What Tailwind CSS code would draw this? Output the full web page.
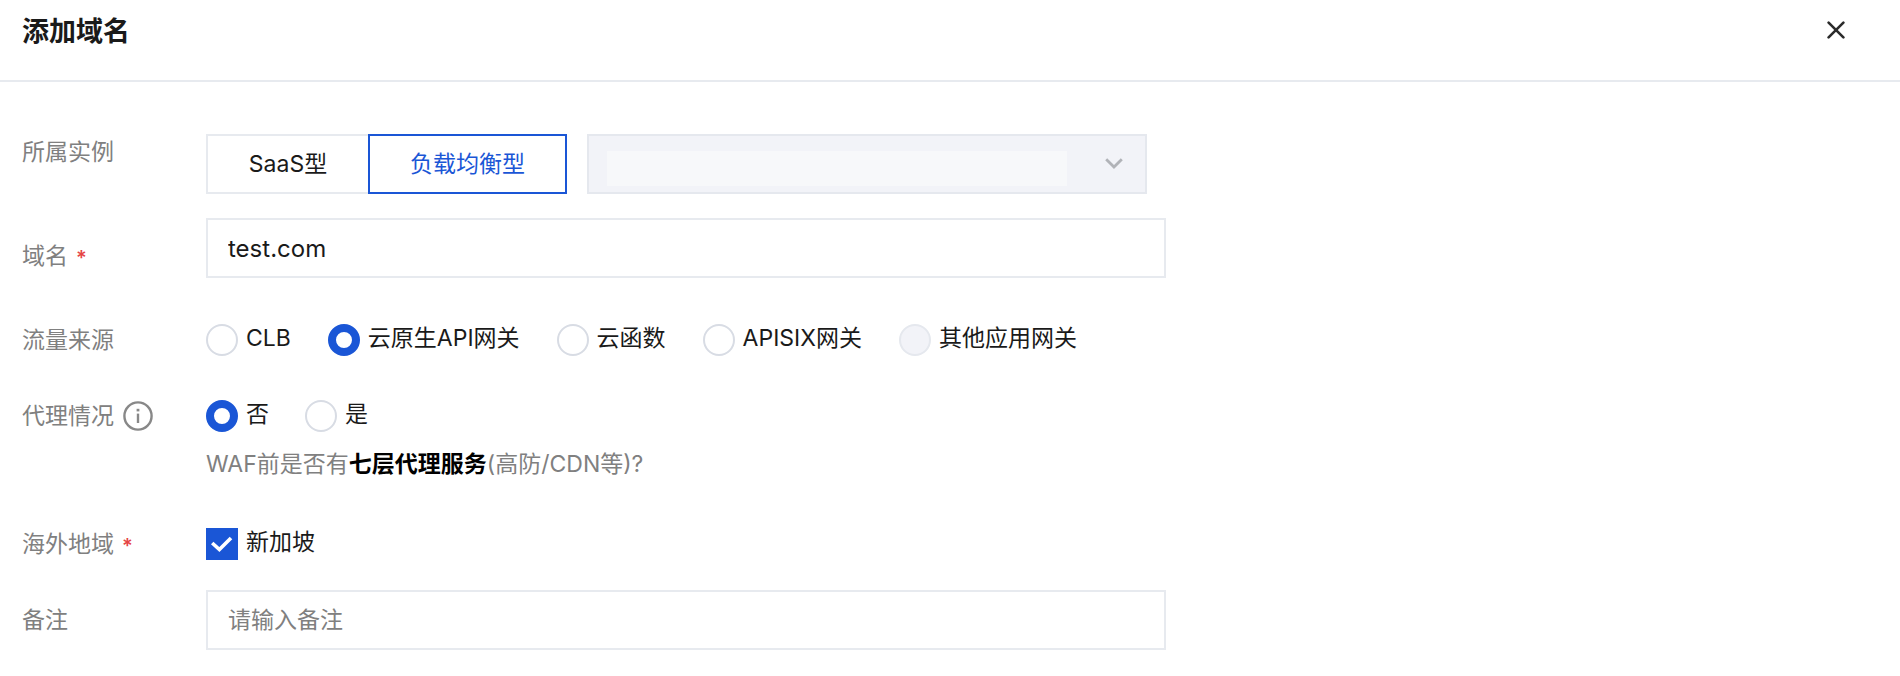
<!DOCTYPE html>
<html lang="zh-CN">
<head>
    <meta charset="UTF-8">
    <meta name="viewport" content="width=device-width, initial-scale=1.0">
    <title>添加域名</title>
    <script src="https://cdn.jsdelivr.net/npm/@tailwindcss/browser@4"></script>
</head>
<body class="min-h-screen bg-white font-['Inter','Noto_Sans_CJK_SC',sans-serif] text-[23px] leading-9 text-[#1a1a1a]">
    <!-- Header -->
    <header class="flex items-start justify-between border-b-2 border-[#e7eaef] pt-3 pr-[52px] pb-[30px] pl-[22px]">
        <h1 class="pt-0.5 text-[27px] leading-9 font-bold">添加域名</h1>
        <button type="button" aria-label="关闭" class="flex h-9 w-6 items-center justify-center">
            <svg class="h-[18px] w-[18px]" viewBox="0 0 18 18" fill="none" stroke="#2b2b2b" stroke-width="2.6" stroke-linecap="round">
                <path d="M1.6 1.6L16.4 16.4M16.4 1.6L1.6 16.4" />
            </svg>
        </button>
    </header>

    <form class="px-[22px] pt-[52px]">
        <!-- Instance -->
        <div class="flex items-start">
            <label for="instance" class="w-[184px] shrink-0 text-[#808080]">所属实例</label>
            <div class="flex gap-5">
                <div class="flex">
                    <button type="button" class="h-[60px] w-[162px] border-2 border-r-0 border-[#e7eaef]">SaaS型</button>
                    <button type="button" class="h-[60px] w-[199px] border-2 border-[#1a56d6] text-[#1a56d6]">负载均衡型</button>
                </div>
                <div class="relative w-[560px]">
                    <select id="instance" disabled class="h-[60px] w-full appearance-none border-2 border-[#e5e8ee] bg-[#f2f3f8] px-5 opacity-100">
                        <option></option>
                    </select>
                    <div class="absolute top-[17px] left-5 h-[35px] w-[460px] bg-[#f7f8fa]"></div>
                    <svg class="absolute top-6 right-6 h-3 w-[18px]" viewBox="0 0 18 12" fill="none" stroke="#b1b3b8" stroke-width="2.8">
                        <path d="M1.2 1.2L9 9L16.8 1.2" />
                    </svg>
                </div>
            </div>
        </div>

        <!-- Domain -->
        <div class="mt-6 flex items-start">
            <label for="domain" class="flex w-[184px] shrink-0 gap-2 pt-5 text-[#808080]">域名<span class="pt-0.5 text-[20px] leading-9 font-semibold text-[#e54545]">*</span></label>
            <input id="domain" type="text" value="test.com" class="h-[60px] w-[960px] border-2 border-[#e7eaef] px-5 text-[24px] outline-none">
        </div>

        <!-- Traffic source -->
        <div class="mt-11 flex items-center" role="radiogroup" aria-labelledby="sourceLabel">
            <span id="sourceLabel" class="w-[184px] shrink-0 text-[#808080]">流量来源</span>
            <div class="flex h-9 items-center gap-[37px]">
                <label class="flex items-center gap-2">
                    <input type="radio" name="source" class="h-8 w-8 appearance-none rounded-full border-2 border-[#d8dce4] checked:border-8 checked:border-[#1a56d6]">
                    <span class="pb-1 leading-8">CLB</span>
                </label>
                <label class="flex items-center gap-2">
                    <input type="radio" name="source" checked class="h-8 w-8 appearance-none rounded-full border-2 border-[#d8dce4] checked:border-8 checked:border-[#1a56d6]">
                    <span class="pb-1 leading-8">云原生API网关</span>
                </label>
                <label class="flex items-center gap-2">
                    <input type="radio" name="source" class="h-8 w-8 appearance-none rounded-full border-2 border-[#d8dce4] checked:border-8 checked:border-[#1a56d6]">
                    <span class="pb-1 leading-8">云函数</span>
                </label>
                <label class="flex items-center gap-2">
                    <input type="radio" name="source" class="h-8 w-8 appearance-none rounded-full border-2 border-[#d8dce4] checked:border-8 checked:border-[#1a56d6]">
                    <span class="pb-1 leading-8">APISIX网关</span>
                </label>
                <label class="flex items-center gap-2">
                    <input type="radio" name="source" disabled class="h-8 w-8 appearance-none rounded-full border-2 border-[#e5e8ee] bg-[#f2f3f8]">
                    <span class="pb-1 leading-8">其他应用网关</span>
                </label>
            </div>
        </div>

        <!-- Proxy -->
        <div class="mt-10 flex items-start" role="radiogroup" aria-labelledby="proxyLabel">
            <div class="flex w-[184px] shrink-0 items-center gap-[9px] text-[#808080]">
                <span id="proxyLabel">代理情况</span>
                <svg class="h-[30px] w-[30px]" viewBox="0 0 30 30" fill="none" stroke="#888" stroke-width="2.4">
                    <circle cx="15" cy="15" r="13.6" />
                    <path d="M15 12.6V22" />
                    <path d="M15 7.8V10.4" stroke-width="2.8" />
                </svg>
            </div>
            <div>
                <div class="flex h-9 items-center gap-9">
                    <label class="flex items-center gap-2">
                        <input type="radio" name="proxy" checked class="h-8 w-8 appearance-none rounded-full border-2 border-[#d8dce4] checked:border-8 checked:border-[#1a56d6]">
                        <span class="pb-1 leading-8">否</span>
                    </label>
                    <label class="flex items-center gap-2">
                        <input type="radio" name="proxy" class="h-8 w-8 appearance-none rounded-full border-2 border-[#d8dce4] checked:border-8 checked:border-[#1a56d6]">
                        <span class="pb-1 leading-8">是</span>
                    </label>
                </div>
                <p class="mt-3 text-[#808080]">WAF前是否有<strong class="font-bold text-black">七层代理服务</strong>(高防/CDN等)?</p>
            </div>
        </div>

        <!-- Region -->
        <div class="mt-11 flex items-start" role="group" aria-labelledby="regionLabel">
            <span id="regionLabel" class="flex h-9 w-[184px] shrink-0 gap-2 text-[#808080]">海外地域<span class="pt-0.5 text-[20px] leading-9 font-semibold text-[#e54545]">*</span></span>
            <label class="flex h-9 items-center gap-2">
                <span class="relative flex">
                    <input type="checkbox" checked class="peer h-8 w-8 appearance-none border-2 border-[#d8dce4] checked:border-[#1a56d6] checked:bg-[#1a56d6]">
                    <svg class="pointer-events-none absolute inset-0 hidden h-8 w-8 peer-checked:block" viewBox="0 0 32 32" fill="none" stroke="#fff" stroke-width="3.6">
                        <path d="M6.2 15L13.4 21.6L25 10" />
                    </svg>
                </span>
                <span class="pb-1 leading-8">新加坡</span>
            </label>
        </div>

        <!-- Remark -->
        <div class="mt-7 flex items-center">
            <label for="remark" class="w-[184px] shrink-0 text-[#808080]">备注</label>
            <input id="remark" type="text" placeholder="请输入备注" class="h-[60px] w-[960px] border-2 border-[#e7eaef] px-5 outline-none placeholder:text-[#808080]">
        </div>
    </form>
</body>
</html>
